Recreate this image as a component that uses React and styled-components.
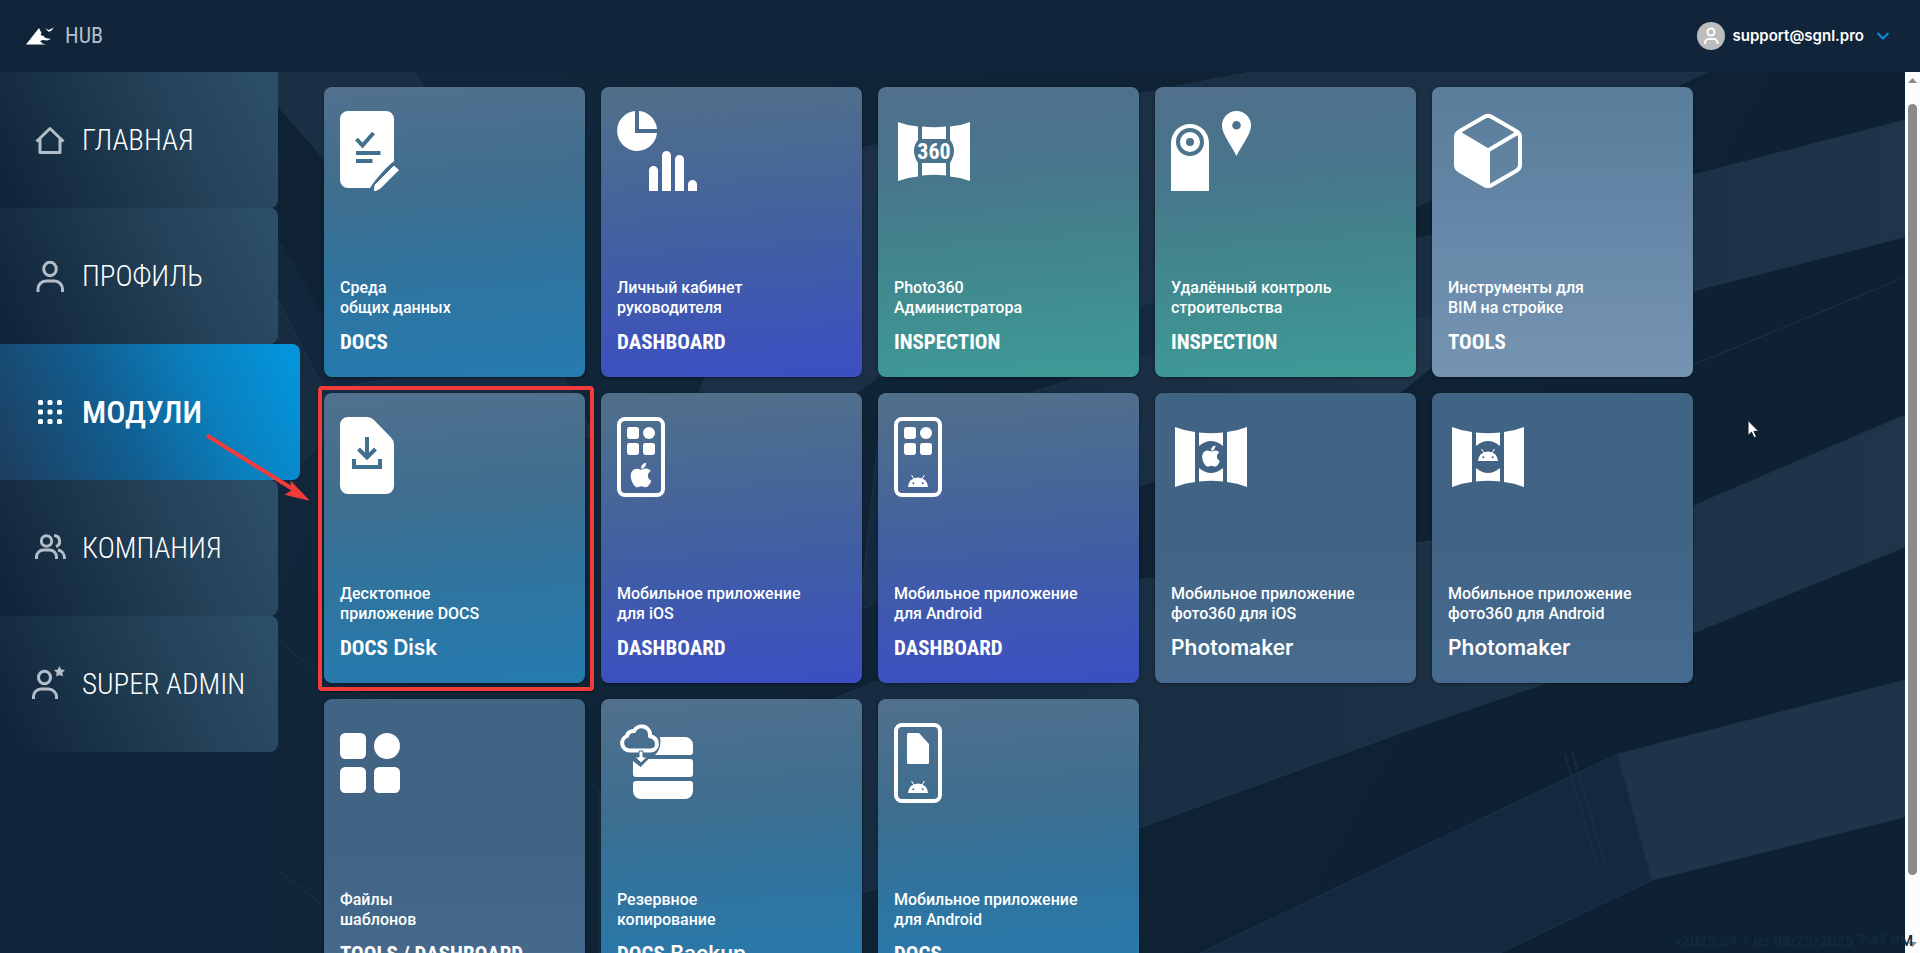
import React from "react";
import styled, { createGlobalStyle, css } from "styled-components";
import { FaApple } from "react-icons/fa";

const condensed = `"Roboto Condensed", "Liberation Sans", sans-serif`;
const regular = `Roboto, "Liberation Sans", sans-serif`;
const wide = `Inter, Roboto, sans-serif`;

const GlobalStyle = createGlobalStyle`
  *, *::before, *::after { box-sizing: border-box; }
  body { margin: 0; background: #0e2233; }
`;

const Shell = styled.div`
  position: relative;
  display: flex;
  flex-direction: column;
  height: 100vh;
  overflow: hidden;
  background: #0e2233;
  color: #fff;
  font-family: ${regular};
`;

const Header = styled.header`
  display: flex;
  align-items: center;
  justify-content: space-between;
  flex: none;
  height: 72px;
  padding: 0 30px 0 26px;
  background: #102539;
`;

const Brand = styled.a`
  display: flex;
  align-items: center;
  gap: 10px;
  color: #b4bec8;
  font: 400 22px/24px ${condensed};
  text-decoration: none;
`;

const Account = styled.button`
  display: flex;
  align-items: center;
  gap: 8px;
  padding: 0;
  border: 0;
  background: none;
  color: #fff;
  font: 600 15px/20px ${wide};
  cursor: pointer;
`;

const Avatar = styled.span`
  display: flex;
  width: 28px;
  height: 28px;
  border-radius: 50%;
  background: #bdbdbd;
`;

const Chevron = styled.svg`
  margin-left: 4px;
`;

const Body = styled.div`
  display: flex;
  flex: 1;
  min-height: 0;
`;

const Sidebar = styled.nav`
  position: relative;
  z-index: 1;
  flex: none;
  width: 278px;
  background: #102539;
`;

const NavItem = styled.a`
  display: flex;
  align-items: center;
  gap: 14px;
  width: 278px;
  height: 136px;
  padding-left: 32px;
  border-radius: 0 8px 8px 0;
  color: #fff;
  background: linear-gradient(65deg, #10253a 4%, #1b344a 35%, #25435a 65%, #2d5069 100%);
  font: 300 29px/36px ${condensed};
  text-decoration: none;

  svg { color: #b4bec8; }

  &:first-child { border-top-right-radius: 0; }

  ${(p) =>
    p.$active &&
    css`
      width: 300px;
      background: linear-gradient(65deg, #1c4062 4%, #115f92 40%, #0a7fbd 68%, #0495dc 96%);
      font-size: 32px;
      font-weight: 500;
      svg { color: #fff; }
    `}
`;

const Main = styled.main`
  position: relative;
  flex: 1;
  min-width: 0;
  overflow: hidden;
  padding: 15px 46px 0;
`;

const Backdrop = styled.svg`
  position: absolute;
  top: 0;
  left: 0;
`;

const Cards = styled.div`
  position: relative;
  display: grid;
  grid-template-columns: repeat(auto-fill, 261px);
  gap: 16px;
`;

const tones = {
  docs: "linear-gradient(176deg, #50708e 2%, #3f6e8e 35%, #31739d 60%, #257bb0 100%)",
  dashboard: "linear-gradient(176deg, #50708a 2%, #46649a 38%, #405ca8 62%, #3c4fc2 98%)",
  inspection: "linear-gradient(176deg, #50708c 2%, #48768c 30%, #42848c 55%, #3e9a96 98%)",
  tools: "linear-gradient(#5a7d9b, #6788a8 50%, #7594b1)",
  plain: "linear-gradient(#416485, #416485 50%, #476b8e)",
};

const CardCell = styled.div`
  position: relative;
`;

const Card = styled.a`
  display: flex;
  flex-direction: column;
  justify-content: space-between;
  height: 290px;
  padding: 24px 16px 23px;
  border-radius: 8px;
  background: ${(p) => tones[p.$tone]};
  box-shadow: 0 1px 3px rgba(0, 0, 0, 0.4);
  color: #fff;
  text-decoration: none;
`;

const CardIcon = styled.svg`
  display: block;
  width: 80px;
  height: 80px;
  fill: #fff;
`;

const Description = styled.p`
  margin: 0 0 12px;
  font: 500 16px/20px ${regular};
  white-space: pre-line;
`;

const Title = styled.h2`
  margin: 0;
  font: ${(p) => (p.$wide ? 600 : 700)} 21px/24px ${(p) => (p.$wide ? wide : condensed)};
`;

const WideText = styled.span`
  font: 600 21px/24px ${wide};
`;

const Highlight = styled.div`
  position: absolute;
  inset: -7px -9px -8px -6px;
  border: 4px solid #f23b3b;
  border-radius: 4px;
  box-shadow: 0 1px 2px rgba(0, 0, 0, 0.5);
  pointer-events: none;
`;

const Overlay = styled.svg`
  position: absolute;
  z-index: 2;
  pointer-events: none;
`;

const Arrow = styled(Overlay)`
  left: 200px;
  top: 428px;
`;

const Cursor = styled(Overlay)`
  left: 1746px;
  top: 419px;
`;

const ScrollTrack = styled.div`
  display: flex;
  flex-direction: column;
  align-items: center;
  flex: none;
  width: 15px;
  padding: 6px 0;
  background: #fcfcfc;
`;

const ScrollRail = styled.div`
  flex: 1;
  padding-top: 21px;
`;

const ScrollThumb = styled.div`
  width: 9px;
  height: 92%;
  border-radius: 5px;
  background: #8a8a8a;
`;

const Version = styled.footer`
  position: absolute;
  right: 7px;
  bottom: 2px;
  z-index: 2;
  color: #112a40;
  font: 500 15px/20px ${regular};
`;

const icons = {
  home: (
    <g fill="none" stroke="currentColor" strokeWidth="3">
      <path d="M4.500 19.500 18 6.500l13.500 13M8 17v13.500h20V17" strokeLinejoin="round" />
    </g>
  ),
  user: (
    <g fill="none" stroke="currentColor" strokeWidth="3">
      <ellipse cx="18" cy="11" rx="6.300" ry="6.700" />
      <path d="M6 34v-3a8 8 0 0 1 8-8h8.500a8 8 0 0 1 8 8v3" />
    </g>
  ),
  grid: (
    <g fill="currentColor">
      {[6, 15.5, 25].map((y) => [6, 15.5, 25].map((x) => <rect key={`${x}-${y}`} x={x} y={y} width="5" height="5" rx="1.5" />))}
    </g>
  ),
  users: (
    <g fill="none" stroke="currentColor" strokeWidth="3">
      <circle cx="14.500" cy="11" r="5.200" />
      <path d="M4.500 29v-2a7 7 0 0 1 7-7h6a7 7 0 0 1 7 7v2M22 5.500a5.700 5.700 0 0 1 2 11M26 20a8 8 0 0 1 6.500 7.500V29" />
    </g>
  ),
  star: (
    <>
      <g fill="none" stroke="currentColor" strokeWidth="3">
        <ellipse cx="12.500" cy="11.500" rx="6" ry="6.300" />
        <path d="M1.500 33v-2.500a7.500 7.500 0 0 1 7.500-7.500h7.500a8.500 8 0 0 1 8 8v2" />
      </g>
      <path fill="currentColor" d="m27.500 0 1.800 3.400 3.700.6-2.700 2.700.6 3.900-3.400-1.700-3.400 1.700.6-3.900L22 4l3.700-.6z" />
    </>
  ),
};

const AndroidHead = ({ x, y, cut }) => (
  <g transform={`translate(${x} ${y})`}>
    <path d="M0 12a10 9.500 0 0 1 20 0z" />
    <path d="M3.500 0 6 4M16.500 0 14 4" stroke="#fff" fill="none" />
    <circle cx="5.300" cy="8.300" r="1" fill={cut} />
    <circle cx="14.700" cy="8.300" r="1" fill={cut} />
  </g>
);

const Tiles = ({ x, y, size, gap }) => {
  const step = size + gap;
  const r = size / 5;
  return (
    <g transform={`translate(${x} ${y})`}>
      <rect width={size} height={size} rx={r} />
      <circle cx={step + size / 2} cy={size / 2} r={size / 2} />
      <rect y={step} width={size} height={size} rx={r} />
      <rect x={step} y={step} width={size} height={size} rx={r} />
    </g>
  );
};

const PhoneFrame = () => <rect x="2" y="2" width="44" height="76" rx="6" fill="none" stroke="#fff" strokeWidth="4" />;

const SidePanels = () => <path d="M4 10q10 4 20 5v50q-10 1-20 5zM76 10q-10 4-20 5v50q10 1 20 5z" />;

const pictures = {
  docs: (
    <>
      <path d="M8 0h38a8 8 0 0 1 8 8v42.500C49 53 35 69 30 77H8a8 8 0 0 1-8-8V8a8 8 0 0 1 8-8z" />
      <path d="m16.500 28 6 6.500 11-12.500M16 42h24.500M16 50h16.500" fill="none" stroke="#42708f" strokeWidth="4" />
      <path d="m54 55 4.500 4L40 77.500 34.500 80l.5-6z" stroke="#fff" strokeWidth="1" strokeLinejoin="round" />
    </>
  ),
  chart: (
    <>
      <path d="M18 0v22h22A20 20 0 1 1 18 0zM22 0a20 20 0 0 1 18 18H22z" />
      <path d="M32 80V59.500a4.500 4.500 0 0 1 9 0V80zM45 80V44.500a4.500 4.500 0 0 1 9 0V80zM58 80V48.500a4.500 4.500 0 0 1 9 0V80zM71 80v-6.500a4.500 4.500 0 0 1 9 0V80z" />
    </>
  ),
  pano: (
    <>
      <path d="M4 11q10 4 20 4.500V29q-8 10 0 23v13.500q-10 .5-20 4.500zM76 11q-10 4-20 4.500V29q8 10 0 23v13.500q10 .5 20 4.500z" />
      <path d="M28 15.500q12 1.500 24 0V28H28zM28 64.500q12-1.500 24 0V52H28z" />
      <text x="40" y="48" textAnchor="middle" fontFamily="Roboto Condensed, sans-serif" fontWeight="700" fontSize="22">360</text>
    </>
  ),
  camera: (
    <>
      <path fillRule="evenodd" d="M0 80V32a19 19 0 0 1 38 0v48zM19 17a14 14 0 1 0 0 28 14 14 0 0 0 0-28z" />
      <path fillRule="evenodd" d="M19 21a10 10 0 1 0 0 20 10 10 0 0 0 0-20zm0 6a4 4 0 1 1 0 8 4 4 0 0 1 0-8z" />
      <path fillRule="evenodd" d="M65.500 0A14.500 14.500 0 0 1 80 14.500C80 23 72 32 65.500 45 59 32 51 23 51 14.500A14.500 14.500 0 0 1 65.500 0zm0 10a4.300 4.300 0 1 0 0 8.600 4.300 4.300 0 0 0 0-8.600z" />
    </>
  ),
  cube: (
    <>
      <path d="M37 5.500q3-1.500 6 0l25 14.500q4 2 4 6v28q0 4-4 6L43 74.500q-3 1.500-6 0L12 60q-4-2-4-6V26q0-4 4-6zM9 21l31 18.500L71 21M40 39.500V75" fill="none" stroke="#fff" strokeWidth="4" />
      <path d="M9 22v34l31 19V40z" />
    </>
  ),
  download: (
    <>
      <path d="M8 0h19q4 0 7 3l17 17.500q3 3 3 7V69a8 8 0 0 1-8 8H8a8 8 0 0 1-8-8V8a8 8 0 0 1 8-8z" />
      <path d="M27 20v20M18.500 32l8.500 8.500 8.500-8.500M14 42v8h26v-8" fill="none" stroke="#42708f" strokeWidth="4" />
    </>
  ),
  phoneApple: (
    <>
      <PhoneFrame />
      <Tiles x={10} y={10} size={12} gap={4} />
      <FaApple x="10" y="44" size={28} />
    </>
  ),
  phoneAndroid: (
    <>
      <PhoneFrame />
      <Tiles x={10} y={10} size={12} gap={4} />
      <AndroidHead x={14} y={58} cut="#45639c" />
    </>
  ),
  panoApple: (
    <>
      <SidePanels />
      <path d="M28 15.500q12 1.500 24 0V29Q40 19 28 29zM28 64.500q12-1.500 24 0V51Q40 61 28 51z" />
      <FaApple x="28" y="27" size={24} />
    </>
  ),
  panoAndroid: (
    <>
      <SidePanels />
      <path d="M28 15.500q12 1.500 24 0V29Q40 19 28 29zM28 64.500q12-1.500 24 0V51Q40 61 28 51z" />
      <AndroidHead x={30} y={32} cut="#416485" />
    </>
  ),
  tiles: <Tiles x={0} y={10} size={26} gap={8} />,
  backup: (
    <>
      <path d="M43 14h25a8 8 0 0 1 8 8v7a3 3 0 0 1-3 3H38q7-7 5-18zM16 38l7.500 6 8-8H73a3 3 0 0 1 3 3v12a3 3 0 0 1-3 3H19a3 3 0 0 1-3-3zM19 58h54a3 3 0 0 1 3 3v7a8 8 0 0 1-8 8H24a8 8 0 0 1-8-8v-7a3 3 0 0 1 3-3z" />
      <path d="M14 27.500h-1a7.500 7.500 0 0 1-3-14.500q1-5 7-5a8.500 8.500 0 0 1 16 3v2q7 2 7 8a6.500 6.500 0 0 1-6 6.500z" fill="none" stroke="#fff" strokeWidth="4" />
      <path d="M22 28h4v6h4l-6 6-6-6h4z" stroke="#426f8d" strokeWidth="1" />
    </>
  ),
  phoneDoc: (
    <>
      <PhoneFrame />
      <path d="M14.500 10H25l10 11v18.500a1.500 1.500 0 0 1-1.500 1.500h-19a1.500 1.500 0 0 1-1.500-1.500v-28a1.500 1.500 0 0 1 1.500-1.500z" />
      <AndroidHead x={14} y={58} cut="#3f7192" />
    </>
  ),
};

const navItems = [
  { icon: "home", label: "ГЛАВНАЯ" },
  { icon: "user", label: "ПРОФИЛЬ" },
  { icon: "grid", label: "МОДУЛИ", active: true },
  { icon: "users", label: "КОМПАНИЯ" },
  { icon: "star", label: "SUPER ADMIN" },
];

const modules = [
  { icon: "docs", tone: "docs", text: "Среда\nобщих данных", title: "DOCS" },
  { icon: "chart", tone: "dashboard", text: "Личный кабинет\nруководителя", title: "DASHBOARD" },
  { icon: "pano", tone: "inspection", text: "Photo360\nАдминистратора", title: "INSPECTION" },
  { icon: "camera", tone: "inspection", text: "Удалённый контроль\nстроительства", title: "INSPECTION" },
  { icon: "cube", tone: "tools", text: "Инструменты для\nBIM на стройке", title: "TOOLS" },
  { icon: "download", tone: "docs", text: "Десктопное\nприложение DOCS", title: "DOCS", suffix: "Disk", highlighted: true },
  { icon: "phoneApple", tone: "dashboard", text: "Мобильное приложение\nдля iOS", title: "DASHBOARD" },
  { icon: "phoneAndroid", tone: "dashboard", text: "Мобильное приложение\nдля Android", title: "DASHBOARD" },
  { icon: "panoApple", tone: "plain", text: "Мобильное приложение\nфото360 для iOS", title: "Photomaker", wide: true },
  { icon: "panoAndroid", tone: "plain", text: "Мобильное приложение\nфото360 для Android", title: "Photomaker", wide: true },
  { icon: "tiles", tone: "plain", text: "Файлы\nшаблонов", title: "TOOLS / DASHBOARD" },
  { icon: "backup", tone: "docs", text: "Резервное\nкопирование", title: "DOCS", suffix: "Backup" },
  { icon: "phoneDoc", tone: "docs", text: "Мобильное приложение\nдля Android", title: "DOCS" },
];

const BuildingBackdrop = () => (
  <Backdrop width="1627" height="881" viewBox="278 72 1627 881" aria-hidden="true">
    <defs>
      <linearGradient id="beam" x1="0" x2="1">
        <stop offset="0" stopColor="#14293f" />
        <stop offset="1" stopColor="#203549" />
      </linearGradient>
      <linearGradient id="base" x1="0" x2="1" y1="0" y2="0.3">
        <stop offset="0" stopColor="#13283d" />
        <stop offset="0.5" stopColor="#0f2335" />
        <stop offset="1" stopColor="#0e2132" />
      </linearGradient>
    </defs>
    <rect x="278" y="72" width="1627" height="881" fill="url(#base)" />
    <g stroke="#1e3448" strokeWidth="1">
      <path d="M278 72h137l25 40v140l-116-65-46-60z" fill="#1b2f44" />
      <path d="M278 107v130l46 80V160z" fill="#0f2233" stroke="none" />
      <path d="M278 300l46 90 80-13h160l30 60-270 5-46 40z" fill="#182c41" />
      <path d="M800 160 1250 72h458L1150 330 878 377 740 480l-40-90z" fill="#1b3045" />
      <path d="M1693 175 1905 120v117l-212 54-277 66-277 60V306l277-67z" fill="url(#beam)" />
      <path d="M878 440 1200 340 1500 310 1400 393 1100 500 860 610z" fill="url(#beam)" />
      <path d="M1693 506 1905 415v132l-212 86-273 93-281 102-540 125V790l540-210z" fill="url(#beam)" />
      <path d="M1200 953 1420 848l198-94 34 126-152 73z" fill="#14293f" />
      <path d="m1618 754 287-74v137l-253 63z" fill="#1f3449" />
      <path d="m1565 755 33 112M1572 752l33 112M1693 365l212-88M278 640l50 42 80 30M278 870l50 40" fill="none" />
    </g>
  </Backdrop>
);

export default function App() {
  return (
    <Shell>
      <GlobalStyle />
      <Header>
        <Brand href="#">
          <svg width="29" height="20" viewBox="0 0 29 20" aria-hidden="true">
            <path d="M0 18.500 13 2l2.500 5-1 2 3 1 2 2 5.500 1-4 1.500-4-.5-3 1 2.500 2.500 3.500 1z" fill="#fff" />
            <path d="m19 2 3.500 2L28 1.500l-3 3.500-2.500.8z" fill="#fff" />
          </svg>
          HUB
        </Brand>
        <Account type="button">
          <Avatar>
            <svg width="28" height="28" viewBox="0 0 28 28" fill="none" stroke="#fff" strokeWidth="2" aria-hidden="true">
              <circle cx="14" cy="10" r="3.500" />
              <path d="M8 22v-1a4 4 0 0 1 4-4h4.500a4 4 0 0 1 4 4v1" />
            </svg>
          </Avatar>
          support@sgnl.pro
          <Chevron width="14" height="10" viewBox="0 0 14 10" aria-hidden="true">
            <path d="m1.500 2 5.500 5.500L12.500 2" fill="none" stroke="#0b8fd6" strokeWidth="2" />
          </Chevron>
        </Account>
      </Header>
      <Body>
        <Sidebar>
          {navItems.map((item) => (
            <NavItem key={item.label} href="#" $active={item.active} aria-current={item.active ? "page" : undefined}>
              <svg width="36" height="36" viewBox="0 0 36 36" aria-hidden="true">{icons[item.icon]}</svg>
              {item.label}
            </NavItem>
          ))}
        </Sidebar>
        <Main>
          <BuildingBackdrop />
          <Cards>
            {modules.map((m) => (
              <CardCell key={m.icon}>
                <Card href="#" $tone={m.tone}>
                  <CardIcon viewBox="0 0 80 80" aria-hidden="true">{pictures[m.icon]}</CardIcon>
                  <div>
                    <Description>{m.text}</Description>
                    <Title $wide={m.wide}>
                      {m.title}
                      {m.suffix && <WideText> {m.suffix}</WideText>}
                    </Title>
                  </div>
                </Card>
                {m.highlighted && <Highlight />}
              </CardCell>
            ))}
          </Cards>
        </Main>
        <ScrollTrack aria-hidden="true">
          <svg width="9" height="5" viewBox="0 0 9 5"><path d="M4.500 0 9 5H0z" fill="#8a8a8a" /></svg>
          <ScrollRail><ScrollThumb /></ScrollRail>
          <svg width="9" height="5" viewBox="0 0 9 5"><path d="M0 0h9L4.500 5z" fill="#8a8a8a" /></svg>
        </ScrollTrack>
      </Body>
      <Version>v2025.24.1 из 08/29/2025 7:47 PM</Version>
      <Arrow width="116" height="80" viewBox="200 428 116 80" aria-hidden="true">
        <path d="M207 435.500 296 491" stroke="#f23b3b" strokeWidth="4" />
        <path d="m308.500 500-23-5.500 6.500-4-1-9z" fill="#f23b3b" stroke="#f23b3b" />
      </Arrow>
      <Cursor width="16" height="22" viewBox="0 0 16 22" aria-hidden="true">
        <path d="M2 1.500v15l3.500-3.300 2.500 5.600 2.500-1.100L8 12.300h4.800z" fill="#fff" stroke="#0a1622" />
      </Cursor>
    </Shell>
  );
}
